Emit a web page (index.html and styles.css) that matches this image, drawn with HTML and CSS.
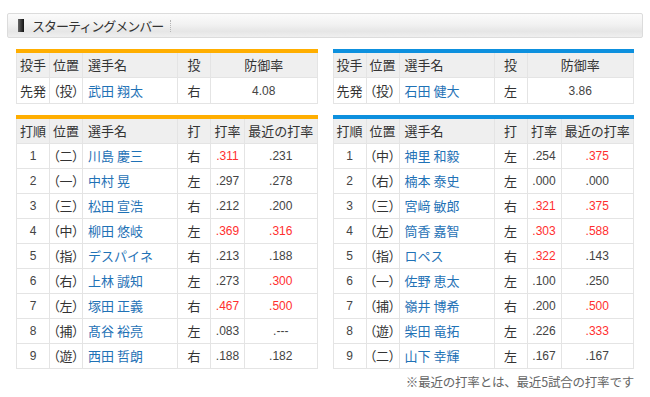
FILE: index.html
```html
<!DOCTYPE html>
<html lang="ja">
<head>
<meta charset="utf-8">
<link rel="stylesheet" href="styles.css">
</head>
<body>
<div class="page">
  <div class="title-bar">
    <span class="title-mark"></span>
    <span class="title-text">スターティングメンバー</span>
    <span class="title-sep"></span>
  </div>
  <div class="content">
    <div class="grid">
      <table class="tbl home pitch">
        <colgroup><col class="c1"><col class="c2"><col class="c3"><col class="c4"><col></colgroup>
        <tr class="head"><th>投手</th><th>位置</th><th class="name">選手名</th><th>投</th><th>防御率</th></tr>
        <tr><td>先発</td><td class="pos">（投）</td><td class="name"><a>武田 翔太</a></td><td>右</td><td class="num">4.08</td></tr>
      </table>
      <table class="tbl away pitch">
        <colgroup><col class="c1"><col class="c2"><col class="c3"><col class="c4"><col></colgroup>
        <tr class="head"><th>投手</th><th>位置</th><th class="name">選手名</th><th>投</th><th>防御率</th></tr>
        <tr><td>先発</td><td class="pos">（投）</td><td class="name"><a>石田 健大</a></td><td>左</td><td class="num">3.86</td></tr>
      </table>

      <table class="tbl home bat">
        <colgroup><col class="c1"><col class="c2"><col class="c3"><col class="c4"><col class="c5"><col></colgroup>
        <tr class="head"><th>打順</th><th>位置</th><th class="name">選手名</th><th>打</th><th>打率</th><th>最近の打率</th></tr>
        <tr><td class="num">1</td><td class="pos">（二）</td><td class="name"><a>川島 慶三</a></td><td>右</td><td class="num red">.311</td><td class="num">.231</td></tr>
        <tr><td class="num">2</td><td class="pos">（一）</td><td class="name"><a>中村 晃</a></td><td>左</td><td class="num">.297</td><td class="num">.278</td></tr>
        <tr><td class="num">3</td><td class="pos">（三）</td><td class="name"><a>松田 宣浩</a></td><td>右</td><td class="num">.212</td><td class="num">.200</td></tr>
        <tr><td class="num">4</td><td class="pos">（中）</td><td class="name"><a>柳田 悠岐</a></td><td>左</td><td class="num red">.369</td><td class="num red">.316</td></tr>
        <tr><td class="num">5</td><td class="pos">（指）</td><td class="name"><a>デスパイネ</a></td><td>右</td><td class="num">.213</td><td class="num">.188</td></tr>
        <tr><td class="num">6</td><td class="pos">（右）</td><td class="name"><a>上林 誠知</a></td><td>左</td><td class="num">.273</td><td class="num red">.300</td></tr>
        <tr><td class="num">7</td><td class="pos">（左）</td><td class="name"><a>塚田 正義</a></td><td>右</td><td class="num red">.467</td><td class="num red">.500</td></tr>
        <tr><td class="num">8</td><td class="pos">（捕）</td><td class="name"><a>髙谷 裕亮</a></td><td>左</td><td class="num">.083</td><td class="num">.---</td></tr>
        <tr><td class="num">9</td><td class="pos">（遊）</td><td class="name"><a>西田 哲朗</a></td><td>右</td><td class="num">.188</td><td class="num">.182</td></tr>
      </table>
      <table class="tbl away bat">
        <colgroup><col class="c1"><col class="c2"><col class="c3"><col class="c4"><col class="c5"><col></colgroup>
        <tr class="head"><th>打順</th><th>位置</th><th class="name">選手名</th><th>打</th><th>打率</th><th>最近の打率</th></tr>
        <tr><td class="num">1</td><td class="pos">（中）</td><td class="name"><a>神里 和毅</a></td><td>左</td><td class="num">.254</td><td class="num red">.375</td></tr>
        <tr><td class="num">2</td><td class="pos">（右）</td><td class="name"><a>楠本 泰史</a></td><td>左</td><td class="num">.000</td><td class="num">.000</td></tr>
        <tr><td class="num">3</td><td class="pos">（三）</td><td class="name"><a>宮﨑 敏郎</a></td><td>右</td><td class="num red">.321</td><td class="num red">.375</td></tr>
        <tr><td class="num">4</td><td class="pos">（左）</td><td class="name"><a>筒香 嘉智</a></td><td>左</td><td class="num red">.303</td><td class="num red">.588</td></tr>
        <tr><td class="num">5</td><td class="pos">（指）</td><td class="name"><a>ロペス</a></td><td>右</td><td class="num red">.322</td><td class="num">.143</td></tr>
        <tr><td class="num">6</td><td class="pos">（一）</td><td class="name"><a>佐野 恵太</a></td><td>左</td><td class="num">.100</td><td class="num">.250</td></tr>
        <tr><td class="num">7</td><td class="pos">（捕）</td><td class="name"><a>嶺井 博希</a></td><td>右</td><td class="num">.200</td><td class="num red">.500</td></tr>
        <tr><td class="num">8</td><td class="pos">（遊）</td><td class="name"><a>柴田 竜拓</a></td><td>左</td><td class="num">.226</td><td class="num red">.333</td></tr>
        <tr><td class="num">9</td><td class="pos">（二）</td><td class="name"><a>山下 幸輝</a></td><td>左</td><td class="num">.167</td><td class="num">.167</td></tr>
      </table>
    </div>
    <p class="note">※最近の打率とは、最近5試合の打率です</p>
  </div>
</div>
</body>
</html>
```

FILE: styles.css
```css
html, body {
  margin: 0;
  padding: 0;
  background: #fff;
}
body {
  font-family: "Liberation Sans", "Noto Sans CJK JP", sans-serif;
  color: #333;
  font-size: 13px;
}
.page {
  padding: 13px 7px 0 7px;
}
.title-bar {
  box-sizing: border-box;
  height: 25px;
  border: 1px solid #dcdcdc;
  border-radius: 2px;
  background: linear-gradient(#fbfbfb 0%, #f2f2f2 45%, #e6e6e6 75%, #efefef 100%);
  display: flex;
  align-items: center;
  padding-left: 10px;
}
.title-mark {
  width: 6px;
  height: 13px;
  background: linear-gradient(90deg, #666, #111);
}
.title-text {
  margin-left: 8px;
  font-family: "Noto Sans CJK JP", sans-serif;
  font-size: 13px;
  letter-spacing: -1px;
  color: #333;
}
.title-sep {
  margin-left: 7px;
  height: 12px;
  border-left: 1px dotted #b5b5b5;
}
.content {
  padding: 11px 9px 0 9px;
}
.grid {
  display: grid;
  grid-template-columns: 1fr 1fr;
  column-gap: 15px;
  row-gap: 11px;
}
.tbl {
  width: 100%;
  border-collapse: collapse;
  table-layout: fixed;
  font-family: "Noto Sans CJK JP", sans-serif;
}
.tbl.home { border-top: 4px solid #ffae00; }
.tbl.away { border-top: 4px solid #0d90de; }
.tbl col.c1 { width: 33px; }
.tbl col.c2 { width: 33px; }
.tbl col.c3 { width: 95px; }
.tbl col.c4 { width: 33px; }
.tbl col.c5 { width: 34px; }
.tbl th, .tbl td {
  border: 1px solid #e4e4e4;
  height: 24px;
  padding: 0;
  text-align: center;
  font-weight: normal;
  font-size: 13px;
  line-height: 16px;
  white-space: nowrap;
  overflow: hidden;
}
.tbl.pitch tr + tr td { height: 25px; }
.tbl th {
  background: #efefef;
  color: #333;
}
.tbl .name {
  text-align: left;
  padding-left: 5px;
}
.tbl .pos {
  font-feature-settings: "palt";
  text-align: center;
}
.tbl a {
  color: #1f72b6;
  text-decoration: none;
}
.tbl td.num {
  font-family: "Liberation Sans", sans-serif;
  font-size: 12px;
  color: #444;
}
.tbl td.num.red {
  color: #ff2f2f;
}
.note {
  margin: 3px 0 0 0;
  text-align: right;
  font-family: "Noto Sans CJK JP", sans-serif;
  font-size: 12.5px;
  color: #666;
  letter-spacing: -0.2px;
}
```
